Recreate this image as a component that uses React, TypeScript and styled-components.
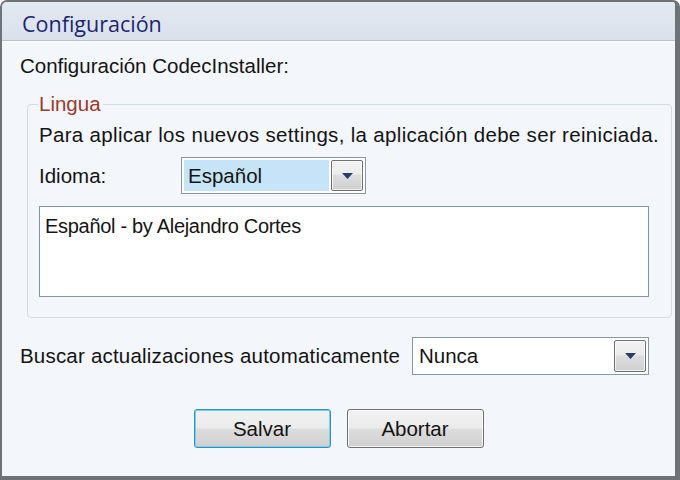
import React from "react";
import styled, { createGlobalStyle } from "styled-components";

const Global = createGlobalStyle`
  html, body { margin: 0; padding: 0; background: #ffffff; }
  * { box-sizing: border-box; }
`;

const Window = styled.div`
  width: 680px;
  height: 480px;
  display: flex;
  flex-direction: column;
  border-style: solid;
  border-color: #6f7276;
  border-width: 2px 5px 4px 2px;
  border-radius: 7px 7px 0 0;
  background: #f3f6fa;
  overflow: hidden;
  font-family: "Liberation Sans", Arial, sans-serif;
  color: #141414;
`;

const TitleBar = styled.div`
  height: 39px;
  flex: none;
  display: flex;
  align-items: center;
  padding: 4px 0 0 20px;
  background: linear-gradient(#e3e9f1, #d9e1eb);
  border-bottom: 1px solid #b6c1cd;
  box-shadow: 0 1px 0 #ffffff;
  font-family: "Open Sans", "Noto Sans", sans-serif;
  font-size: 21.5px;
  color: #1b2474;
`;

const Body = styled.div`
  flex: 1;
  display: flex;
  flex-direction: column;
  padding: 14px 0 0 18px;
  font-size: 20.5px;
  line-height: 22px;
`;

const Heading = styled.div`
  height: 22px;
  white-space: nowrap;
`;

const Group = styled.fieldset`
  margin: 16px 0 0 7px;
  width: 636px;
  border: 1px solid #d3dbe3;
  border-radius: 4px;
  padding: 9px 12px 20px 11px;
  display: flex;
  flex-direction: column;
`;

const Legend = styled.legend`
  padding: 0 2px 0 1px;
  margin-left: -1px;
  color: #9c3a2c;
  line-height: 22px;
`;

const Notice = styled.div`
  white-space: nowrap;
  letter-spacing: 0.32px;
`;

const Row = styled.div<{ $mt?: number }>`
  display: flex;
  align-items: center;
  margin-top: ${(p) => p.$mt ?? 0}px;
`;

const Label = styled.div<{ $w: number; $spacing?: number }>`
  width: ${(p) => p.$w}px;
  flex: none;
  white-space: nowrap;
  letter-spacing: ${(p) => p.$spacing ?? 0}px;
`;

const Combo = styled.div<{ $w: number; $h: number }>`
  width: ${(p) => p.$w}px;
  height: ${(p) => p.$h}px;
  display: flex;
  align-items: stretch;
  border: 1px solid #8896a8;
  background: #ffffff;
  padding: 2px;
  gap: 2px;
`;

const ComboText = styled.div<{ $selected?: boolean }>`
  flex: 1;
  display: flex;
  align-items: center;
  padding-left: 4px;
  background: ${(p) => (p.$selected ? "#c6e4f7" : "transparent")};
`;

const DropButton = styled.div`
  width: 32px;
  flex: none;
  display: flex;
  align-items: center;
  justify-content: center;
  border: 1px solid #707070;
  border-radius: 2px;
  background: linear-gradient(#f3f3f3 0%, #ebebeb 45%, #dddddd 50%, #cfcfcf 100%);
  box-shadow: inset 0 0 0 1px rgba(255, 255, 255, 0.7);
`;

const TextArea = styled.div`
  margin-top: 12px;
  width: 610px;
  height: 91px;
  background: #ffffff;
  border: 1px solid #8395ab;
  padding: 8px 5px 5px;
  font-size: 20px;
  letter-spacing: -0.3px;
`;

const Buttons = styled.div`
  display: flex;
  justify-content: center;
  gap: 16px;
  margin-top: 34px;
  margin-left: -18px;
`;

const Button = styled.div<{ $focused?: boolean }>`
  width: 137px;
  height: 39px;
  display: flex;
  align-items: center;
  justify-content: center;
  border: 1px solid ${(p) => (p.$focused ? "#3c8dbd" : "#707070")};
  border-radius: 3px;
  background: linear-gradient(#f2f2f2 0%, #ebebeb 48%, #dddddd 52%, #cfcfcf 100%);
  box-shadow: inset 0 0 0 1px ${(p) => (p.$focused ? "#6fd3f7" : "rgba(255,255,255,0.8)")};
`;

const Arrow = () => (
  <svg width="11" height="6" viewBox="0 0 11 6">
    <path d="M0 0 H11 L5.5 6 Z" fill="#2c3c69" />
  </svg>
);

export default function App() {
  return (
    <>
      <Global />
      <Window>
        <TitleBar>Configuración</TitleBar>
        <Body>
          <Heading>Configuración CodecInstaller:</Heading>
          <Group>
            <Legend>Lingua</Legend>
            <Notice>Para aplicar los nuevos settings, la aplicación debe ser reiniciada.</Notice>
            <Row $mt={11}>
              <Label $w={142}>Idioma:</Label>
              <Combo $w={185} $h={37}>
                <ComboText $selected>Español</ComboText>
                <DropButton>
                  <Arrow />
                </DropButton>
              </Combo>
            </Row>
            <TextArea>Español - by Alejandro Cortes</TextArea>
          </Group>
          <Row $mt={19}>
            <Label $w={392} $spacing={0.2}>
              Buscar actualizaciones automaticamente
            </Label>
            <Combo $w={237} $h={38}>
              <ComboText>Nunca</ComboText>
              <DropButton>
                <Arrow />
              </DropButton>
            </Combo>
          </Row>
          <Buttons>
            <Button $focused>Salvar</Button>
            <Button>Abortar</Button>
          </Buttons>
        </Body>
      </Window>
    </>
  );
}
